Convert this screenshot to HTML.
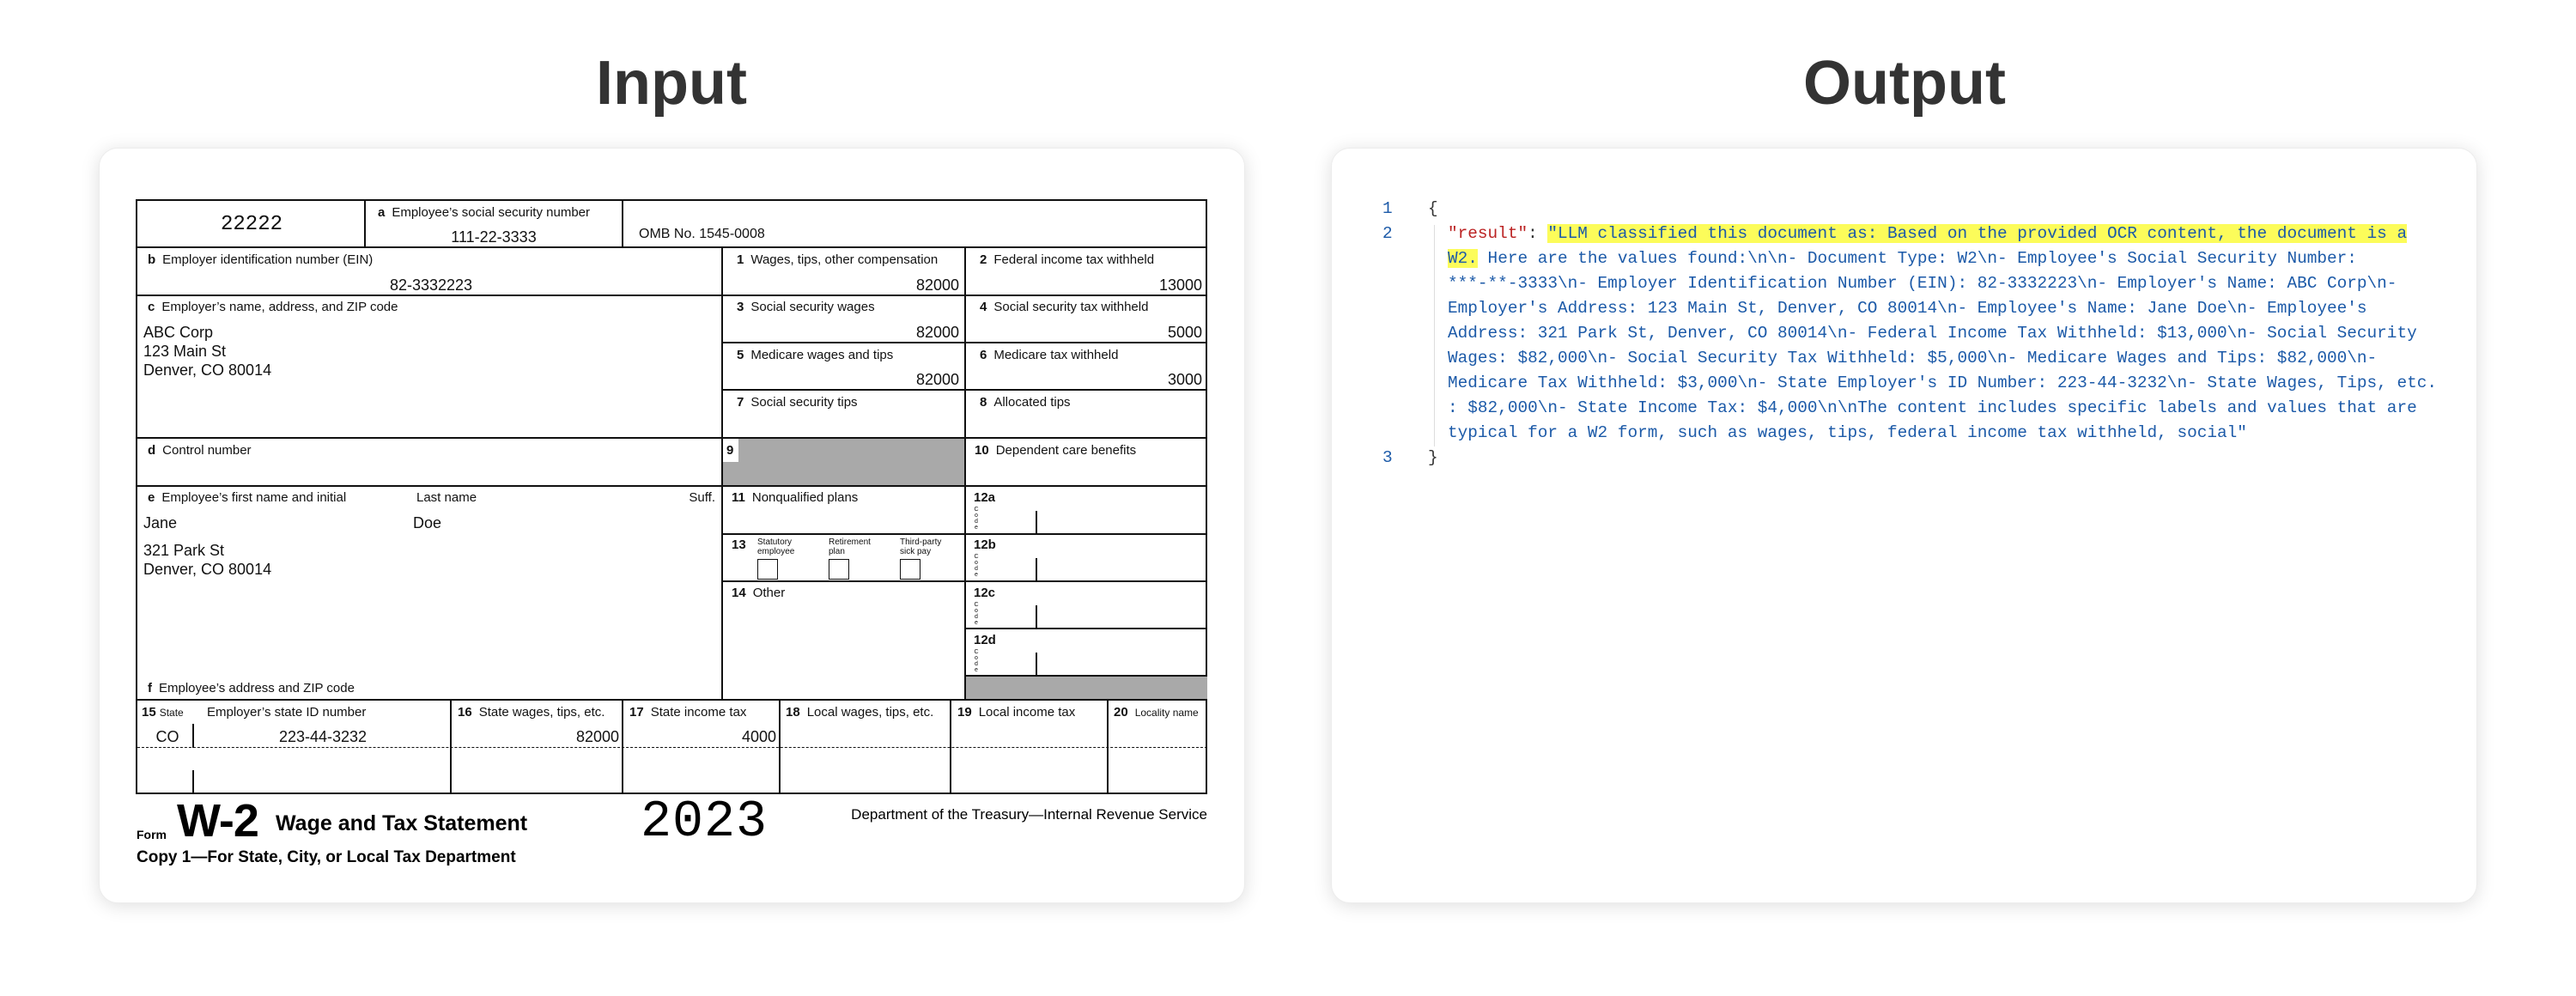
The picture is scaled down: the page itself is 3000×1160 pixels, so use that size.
<!DOCTYPE html>
<html><head><meta charset="utf-8"><style>
*{margin:0;padding:0;box-sizing:border-box}
body{width:3000px;height:1160px;background:#fff;position:relative;overflow:hidden;font-family:"Liberation Sans",sans-serif}
.t{position:absolute;font-size:72px;font-weight:bold;color:#333;transform:translateX(-50%);top:56px}
.card{position:absolute;top:172px;width:1335px;height:880px;background:#fff;border-radius:22px;box-shadow:0 3px 22px rgba(0,0,0,.13);border:1px solid #ececec}
#form{position:absolute;left:158px;top:232px;width:1248px;height:693px;border:2px solid #111;font-family:"Liberation Sans Narrow","Liberation Sans",sans-serif;color:#111}
.h{position:absolute;height:0;border-top:2px solid #111}
.v{position:absolute;width:0;border-left:2px solid #111}
.s{position:absolute;white-space:nowrap;font-size:15px;line-height:18px;transform:translateY(-50%)}
.s b{font-weight:bold;margin-right:8px}
.val{position:absolute;white-space:nowrap;font-size:18px;line-height:20px;transform:translateY(-50%)}
.r{transform:translate(-100%,-50%)}
.c{transform:translate(-50%,-50%)}
.g{position:absolute;background:#a9a9a9}
.cb{position:absolute;width:24px;height:24px;border:1.5px solid #111;top:417px}
.tiny{position:absolute;font-size:10px;line-height:11px}
.code{position:absolute;font-size:7px;line-height:7px;width:6px;text-align:center}
.mono{position:absolute;font-family:"Liberation Mono","DejaVu Sans Mono",monospace;font-size:19.4px;line-height:29px;white-space:pre;color:#1c5aa8}
.ln{position:absolute;font-family:"Liberation Mono",monospace;font-size:19.4px;line-height:29px;color:#1c5aa8;left:1610px}
.hl{background:#fcfc5a}
</style></head><body>
<div class="t" style="left:782px">Input</div>
<div class="t" style="left:2218px">Output</div>
<div class="card" style="left:115px"></div>
<div class="card" style="left:1550px"></div>

<div id="form">
<div class="h" style="left:0;width:1246px;top:53px"></div>
<div class="h" style="left:0;width:1246px;top:109px"></div>
<div class="h" style="left:682px;width:564px;top:164px"></div>
<div class="h" style="left:682px;width:564px;top:219px"></div>
<div class="h" style="left:0;width:1246px;top:275px"></div>
<div class="h" style="left:0;width:1246px;top:331px"></div>
<div class="h" style="left:682px;width:564px;top:387px"></div>
<div class="h" style="left:682px;width:564px;top:442px"></div>
<div class="h" style="left:965px;width:281px;top:497px"></div>
<div class="h" style="left:965px;width:281px;top:552px"></div>
<div class="h" style="left:0;width:1246px;top:580px"></div>
<div class="h" style="left:0;width:1246px;top:636px;border-top:1.5px dashed #111"></div>
<div class="v" style="left:264px;top:0;height:54px"></div>
<div class="v" style="left:564px;top:0;height:54px"></div>
<div class="v" style="left:680px;top:54px;height:527px"></div>
<div class="v" style="left:963px;top:54px;height:527px"></div>
<div class="g" style="left:682px;top:277px;width:281px;height:54px"></div>
<div style="position:absolute;left:682px;top:277px;width:18px;height:27px;background:#fff"></div>
<div class="g" style="left:965px;top:554px;width:281px;height:26px"></div>
<div class="v" style="left:1046px;top:361px;height:27px"></div>
<div class="v" style="left:1046px;top:416px;height:27px"></div>
<div class="v" style="left:1046px;top:471px;height:27px"></div>
<div class="v" style="left:1046px;top:526px;height:27px"></div>
<div class="v" style="left:64px;top:609px;height:28px"></div>
<div class="v" style="left:64px;top:663px;height:28px"></div>
<div class="v" style="left:364px;top:581px;height:110px"></div>
<div class="v" style="left:564px;top:581px;height:110px"></div>
<div class="v" style="left:747px;top:581px;height:110px"></div>
<div class="v" style="left:946px;top:581px;height:110px"></div>
<div class="v" style="left:1129px;top:581px;height:110px"></div>

<div class="val c" style="left:133px;top:28px;font-family:'Liberation Mono',monospace;font-size:24px">22222</div>
<div class="s" style="left:280px;top:14px"><b>a</b>Employee’s social security number</div>
<div class="val c" style="left:415px;top:42px">111-22-3333</div>
<div class="s" style="left:584px;top:39px;font-size:16px">OMB No. 1545-0008</div>

<div class="s" style="left:12px;top:69px"><b>b</b>Employer identification number (EIN)</div>
<div class="val c" style="left:342px;top:98px">82-3332223</div>
<div class="s" style="left:698px;top:69px"><b>1</b>Wages, tips, other compensation</div>
<div class="val r" style="left:957px;top:98px">82000</div>
<div class="s" style="left:981px;top:69px"><b>2</b>Federal income tax withheld</div>
<div class="val r" style="left:1240px;top:98px">13000</div>

<div class="s" style="left:12px;top:124px"><b>c</b>Employer’s name, address, and ZIP code</div>
<div class="val" style="left:7px;top:153px">ABC Corp</div>
<div class="val" style="left:7px;top:175px">123 Main St</div>
<div class="val" style="left:7px;top:197px">Denver, CO 80014</div>
<div class="s" style="left:698px;top:124px"><b>3</b>Social security wages</div>
<div class="val r" style="left:957px;top:153px">82000</div>
<div class="s" style="left:981px;top:124px"><b>4</b>Social security tax withheld</div>
<div class="val r" style="left:1240px;top:153px">5000</div>
<div class="s" style="left:698px;top:180px"><b>5</b>Medicare wages and tips</div>
<div class="val r" style="left:957px;top:208px">82000</div>
<div class="s" style="left:981px;top:180px"><b>6</b>Medicare tax withheld</div>
<div class="val r" style="left:1240px;top:208px">3000</div>
<div class="s" style="left:698px;top:235px"><b>7</b>Social security tips</div>
<div class="s" style="left:981px;top:235px"><b>8</b>Allocated tips</div>

<div class="s" style="left:12px;top:291px"><b>d</b>Control number</div>
<div class="s" style="left:686px;top:291px"><b>9</b></div>
<div class="s" style="left:975px;top:291px"><b>10</b>Dependent care benefits</div>

<div class="s" style="left:12px;top:346px"><b>e</b>Employee’s first name and initial</div>
<div class="s" style="left:325px;top:346px">Last name</div>
<div class="s r" style="left:673px;top:346px">Suff.</div>
<div class="val" style="left:7px;top:375px">Jane</div>
<div class="val" style="left:321px;top:375px">Doe</div>
<div class="val" style="left:7px;top:407px">321 Park St</div>
<div class="val" style="left:7px;top:429px">Denver, CO 80014</div>
<div class="s" style="left:12px;top:568px"><b>f</b>Employee’s address and ZIP code</div>

<div class="s" style="left:692px;top:346px"><b>11</b>Nonqualified plans</div>
<div class="s" style="left:692px;top:401px"><b>13</b></div>
<div class="tiny" style="left:722px;top:392px">Statutory<br>employee</div>
<div class="tiny" style="left:805px;top:392px">Retirement<br>plan</div>
<div class="tiny" style="left:888px;top:392px">Third-party<br>sick pay</div>
<div class="cb" style="left:722px"></div>
<div class="cb" style="left:805px"></div>
<div class="cb" style="left:888px"></div>
<div class="s" style="left:692px;top:457px"><b>14</b>Other</div>

<div class="s" style="left:974px;top:346px"><b>12a</b></div>
<div class="code" style="left:974px;top:356px">C<br>o<br>d<br>e</div>
<div class="s" style="left:974px;top:401px"><b>12b</b></div>
<div class="code" style="left:974px;top:411px">C<br>o<br>d<br>e</div>
<div class="s" style="left:974px;top:457px"><b>12c</b></div>
<div class="code" style="left:974px;top:467px">C<br>o<br>d<br>e</div>
<div class="s" style="left:974px;top:512px"><b>12d</b></div>
<div class="code" style="left:974px;top:522px">C<br>o<br>d<br>e</div>

<div class="s" style="left:5px;top:596px"><b style="margin-right:4px">15</b><span style="font-size:12px">State</span></div>
<div class="s" style="left:81px;top:596px">Employer’s state ID number</div>
<div class="val c" style="left:35px;top:624px">CO</div>
<div class="val c" style="left:216px;top:624px">223-44-3232</div>
<div class="s" style="left:373px;top:596px"><b>16</b>State wages, tips, etc.</div>
<div class="val r" style="left:561px;top:624px">82000</div>
<div class="s" style="left:573px;top:596px"><b>17</b>State income tax</div>
<div class="val r" style="left:744px;top:624px">4000</div>
<div class="s" style="left:755px;top:596px"><b>18</b>Local wages, tips, etc.</div>
<div class="s" style="left:955px;top:596px"><b>19</b>Local income tax</div>
<div class="s" style="left:1137px;top:596px"><b>20</b><span style="font-size:12px">Locality name</span></div>
</div>

<div style="position:absolute;left:159px;top:964px;font-size:14px;font-weight:bold;font-family:'Liberation Sans Narrow','Liberation Sans',sans-serif">Form</div>
<div style="position:absolute;left:206px;top:928px;font-size:54px;line-height:56px;font-weight:bold;font-family:'Liberation Sans Narrow','Liberation Sans',sans-serif;letter-spacing:-1px">W-2</div>
<div style="position:absolute;left:321px;top:945px;font-size:25px;line-height:28px;font-weight:bold;font-family:'Liberation Sans Narrow','Liberation Sans',sans-serif">Wage and Tax Statement</div>
<div style="position:absolute;left:746px;top:928px;font-size:60px;line-height:60px;font-family:'Liberation Mono',monospace;letter-spacing:1px">2023</div>
<div style="position:absolute;right:1594px;top:940px;font-size:17px;line-height:18px;font-family:'Liberation Sans Narrow','Liberation Sans',sans-serif">Department of the Treasury—Internal Revenue Service</div>
<div style="position:absolute;left:159px;top:988px;font-size:19px;line-height:22px;font-weight:bold;font-family:'Liberation Sans Narrow','Liberation Sans',sans-serif">Copy 1—For State, City, or Local Tax Department</div>

<div class="ln" style="top:229px">1</div>
<div class="ln" style="top:258px">2</div>
<div class="ln" style="top:519px">3</div>
<div style="position:absolute;left:1670px;top:262px;width:1px;height:258px;background:#ddd"></div>
<div class="mono" style="left:1663px;top:229px;color:#333">{</div>
<div class="mono" style="left:1663px;top:519px;color:#333">}</div>
<div class="mono" style="left:1686px;top:258px"><span style="color:#b22">"result"</span><span style="color:#333">: </span><span class="hl">"LLM classified this document as: Based on the provided OCR content, the document is a</span>
<span class="hl">W2.</span> Here are the values found:\n\n- Document Type: W2\n- Employee's Social Security Number:
***-**-3333\n- Employer Identification Number (EIN): 82-3332223\n- Employer's Name: ABC Corp\n-
Employer's Address: 123 Main St, Denver, CO 80014\n- Employee's Name: Jane Doe\n- Employee's
Address: 321 Park St, Denver, CO 80014\n- Federal Income Tax Withheld: $13,000\n- Social Security
Wages: $82,000\n- Social Security Tax Withheld: $5,000\n- Medicare Wages and Tips: $82,000\n-
Medicare Tax Withheld: $3,000\n- State Employer's ID Number: 223-44-3232\n- State Wages, Tips, etc.
: $82,000\n- State Income Tax: $4,000\n\nThe content includes specific labels and values that are
typical for a W2 form, such as wages, tips, federal income tax withheld, social"</div>
</body></html>
